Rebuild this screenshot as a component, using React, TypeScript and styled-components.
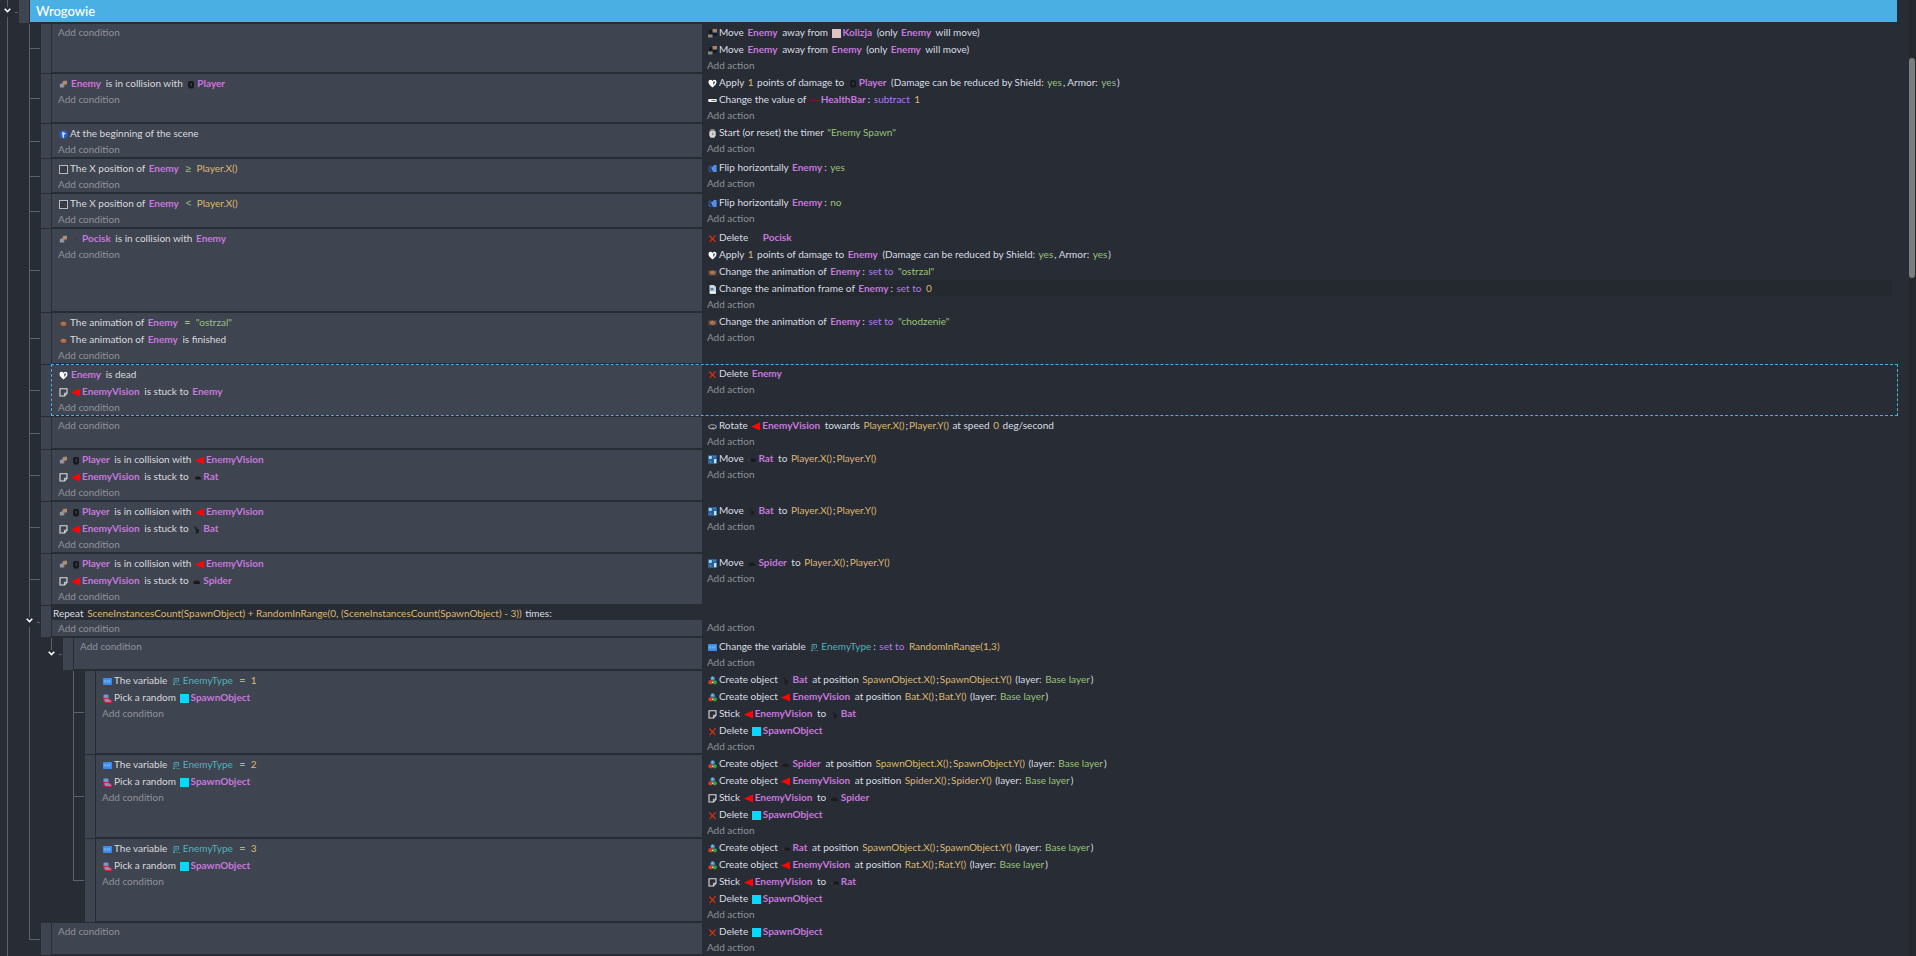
import type { ReactNode } from "react";
import styled, { createGlobalStyle, css } from "styled-components";

const color = {
  page: "#282c34",
  panel: "#3f4451",
  line: "#5c616d",
  group: "#4ab0e4",
  hover: "#24282f",
  muted: "#8f9299",
  object: "#c678dd",
  expression: "#deb871",
  string: "#98c379",
  operator: "#b07af0",
  variable: "#4fb3bd",
};

const GlobalStyle = createGlobalStyle`
  * { box-sizing: border-box; }
  body {
    margin: 0;
    background: ${color.page};
    color: #d9dde6;
    font: 400 10px/16px Lato, "Noto Sans", sans-serif;
  }
  button {
    padding: 0;
    border: 0;
    background: none;
    font: inherit;
    cursor: pointer;
  }
`;

/* ---------- page frame ---------- */

const Page = styled.div`
  display: flex;
  min-height: 100vh;
`;

const Sheet = styled.main`
  flex: 1;
  min-width: 0;
  padding-right: 12px;
`;

const ScrollTrack = styled.div`
  width: 7px;
  padding: 58px 1px 0 0;
  background: #25292f;
`;

const ScrollThumb = styled.div`
  height: 23vh;
  border-radius: 3px;
  background: #7c7d7e;
`;

/* ---------- tree ---------- */

const Nodes = styled.ul`
  margin: 0;
  padding: 0;
  list-style: none;
  flex: 1;
  min-width: 0;
`;

const NodeLine = styled.div`
  display: flex;
`;

const Children = styled.div`
  display: flex;
`;

const Rail = styled.div<{ $line: boolean }>`
  flex: 0 0 15px;
  margin-left: 7px;
  border-left: 1px solid ${(p) => (p.$line ? color.line : "transparent")};
`;

const LeafGutter = styled.div`
  display: grid;
  grid-template-rows: 1fr 1fr;
  flex: 0 0 19px;
  padding: 0 1px 0 7px;
`;

const Elbow = styled.div`
  border-left: 1px solid ${color.line};
  border-bottom: 1px solid ${color.line};
`;

const Tail = styled.div`
  border-left: 1px solid ${color.line};
`;

const FoldGutter = styled.div`
  display: flex;
  align-items: center;
  flex: 0 0 19px;
`;

const FoldColumn = styled.div`
  display: flex;
  flex-direction: column;
  align-items: center;
  align-self: stretch;
  width: 15px;
`;

const Stem = styled.div<{ $line: boolean }>`
  flex: 1;
  width: 1px;
  background: ${(p) => (p.$line ? color.line : "transparent")};
`;

const FoldButton = styled.button`
  display: flex;
  align-items: center;
  justify-content: center;
  width: 11px;
  height: 10px;
  padding-bottom: 3px;
`;

const Dash = styled.div`
  width: 3px;
  height: 1px;
  background: ${color.line};
`;

const Handle = styled.div`
  flex: 0 0 10px;
  margin: 0 1px 1px 0;
  background: ${color.panel};
  cursor: grab;
`;

/* ---------- events ---------- */

const GroupBar = styled.h1`
  flex: 1;
  margin: 0 0 2px;
  padding: 0 6px;
  background: ${color.group};
  color: #fff;
  font-size: 13px;
  font-weight: 500;
  line-height: 22px;
`;

const EventBody = styled.div<{ $selected?: boolean }>`
  display: flex;
  flex-direction: column;
  flex: 1;
  min-width: 0;
  margin-bottom: 2px;
  ${(p) => p.$selected && css`outline: 1px dashed ${color.group};`}
`;

const LoopHeader = styled.div`
  padding-left: 1px;
  line-height: 14px;
  white-space: nowrap;
`;

const Panels = styled.div`
  display: flex;
  flex: 1;
`;

const Conditions = styled.div`
  flex: 1;
  min-width: 0;
  padding: 1px 6px;
  background: ${color.panel};
  color: #d9dadc;
`;

const Actions = styled.div`
  flex: 0 0 calc(63vw - 12px);
  min-width: 0;
  padding: 0 5px;
`;

const Instruction = styled.div<{ $hovered?: boolean }>`
  height: 16px;
  margin-bottom: 1px;
  background: ${(p) => (p.$hovered ? color.hover : "none")};
  white-space: nowrap;
`;

const AddButton = styled.button`
  display: block;
  color: ${color.muted};
  line-height: 14px;
`;

const TypeIcon = styled.svg`
  width: 9px;
  height: 9px;
  margin: 0 2px 0 1px;
  vertical-align: -2px;
`;

const Thumb = styled.svg`
  width: 9px;
  height: 9px;
  margin-right: 2px;
  vertical-align: -2px;
`;

const ObjectName = styled.b`
  padding: 0 2px 0 1px;
  color: ${color.object};
`;

const Value = styled.span<{ $color: string }>`
  padding: 0 1px;
  color: ${(p) => p.$color};
`;

const Variable = styled.span`
  padding: 0 2px;
  color: ${color.variable};
`;

const Relation = styled.span`
  padding: 0 2px;
  color: ${color.string};
  font-family: "Noto Sans", sans-serif;
  line-height: 10px;
`;

/* ---------- icons, on a 9 by 9 grid ---------- */

const note = (
  <>
    <path d="M1 .8h7v4.6L5.6 8H1z" fill="none" stroke="#dedede" strokeWidth="1.1" />
    <path d="M8 5.2H5.4V8" fill="none" stroke="#dedede" strokeWidth=".9" />
  </>
);

const typeIcons: Record<string, ReactNode> = {
  separate: (
    <>
      <rect x="1" y="1" width="4" height="4" fill="#15171b" />
      <rect x="4.5" y="0" width="4.5" height="3.5" fill="#a58465" />
      <rect x="5" y="4" width="4" height="3" fill="#181a1e" />
      <rect x="0" y="5.5" width="4.5" height="3" fill="#85868a" />
    </>
  ),
  collision: (
    <>
      <path d="M3.500 2l1-1.300H8v3L7 5H3.500z" fill="#b08d70" />
      <path d="M.8 4.500l1-1h3.700v3l-1 1H.8z" fill="#96979b" />
      <path d="M4.800 4.600H7v1.200H4.800z" fill="#5a4a42" />
    </>
  ),
  heart: (
    <>
      <path d="M4.500 8.400C2 6.600 .5 5 .5 3c0-2.300 2.800-3 4-1 1.200-2 4-1.300 4 1 0 2-1.500 3.600-4 5.400z" fill="#fff" />
      <path d="M5.100 3c.5-1.200 1.900-.9 1.900.3 0 .9-.8 1.700-1.900 2.600z" fill="#5a5d65" />
    </>
  ),
  bar: (
    <>
      <rect x="0" y="3" width="9" height="3" rx="1.400" fill="#f2f2f2" />
      <rect x="3.500" y="4" width="4" height="1" fill="#6b6f78" />
    </>
  ),
  timer: (
    <>
      <rect x="2.500" y=".2" width="4" height="1.600" fill="#a9a2a2" />
      <path d="M1.300 2h6.400v4.500L6.400 8.800H2.600L1.300 6.500z" fill="#d9d4d2" />
      <path d="M4 3.500h1.500v2.800H4z" fill="#a09290" />
      <path d="M1 1.600h1.200v1.400H1zM7 1.600h1v1.400H7z" fill="#6f6b6d" />
    </>
  ),
  flip: (
    <>
      <path d="M.5 1.500h3v2H2.200v2.300h1.300V8H.5z" fill="#2c4f8c" />
      <path d="M8.600 1H6L4.500 2.600V4H4v2.400h.8V8h3.800z" fill="#4f8df0" />
      <path d="M3 3.500h2v1H3z" fill="#8ab6f5" />
    </>
  ),
  remove: (
    <>
      <path d="M1.300 1.500l6.200 6.300M7.700 1.300L1.500 8" stroke="#5b1d15" strokeWidth="2.200" />
      <path d="M1.300 1.500l6.200 6.300M7.700 1.300L1.500 8" stroke="#c03f26" strokeWidth="1.100" />
    </>
  ),
  animation: (
    <>
      <rect x="0" y="2" width="9" height="5.500" fill="#4a3a36" />
      <ellipse cx="4.500" cy="4.700" rx="3.300" ry="2.300" fill="#96684f" />
      <ellipse cx="4.500" cy="4.200" rx="1.600" ry="1" fill="#b08064" />
    </>
  ),
  frame: (
    <>
      <path d="M1.500 0h4.500L8 2v7H1.500z" fill="#c9d3de" />
      <path d="M2.500 3h3v2.500h-3z" fill="#5a7fa8" />
      <path d="M2 6.500h5.500V8H2z" fill="#f1f4f7" />
    </>
  ),
  note,
  rotate: (
    <>
      <ellipse cx="4.500" cy="4.700" rx="3.800" ry="2" fill="none" stroke="#a3a6ab" strokeWidth="1.100" />
      <path d="M4 5.600h2v2L4 6.700z" fill="#a3a6ab" />
    </>
  ),
  move: (
    <>
      <rect width="9" height="9" fill="#2c5c92" />
      <path d="M.8 1h3v3h-3z" fill="#9bd0ec" />
      <path d="M6 4h2.400v4.200H6z" fill="#c4e2f2" />
      <path d="M5 .8h3v1.700H5z" fill="#3f7fc0" />
      <path d="M1.500 6h2v1.500h-2z" fill="#4a8ecf" />
    </>
  ),
  variable: (
    <>
      <rect y="1" width="9" height="7" rx=".8" fill="#3d8bea" />
      <path d="M1.200 3l1 2.500L3.200 3M4 5.500l.7-2 .8 2M6.500 5.500V3h1.300" fill="none" stroke="#8cc0fb" strokeWidth=".7" />
    </>
  ),
  create: (
    <>
      <circle cx="4.700" cy="2.500" r="2.200" fill="#4a94c8" />
      <circle cx="2.500" cy="6.300" r="2.200" fill="#d23a2a" />
      <circle cx="6.800" cy="6.300" r="2.100" fill="#35a235" />
      <circle cx="4.300" cy="2" r=".8" fill="#a9d5ee" />
      <circle cx="4.600" cy="6.400" r=".8" fill="#d8d8d8" />
    </>
  ),
  start: (
    <>
      <circle cx="4.500" cy="4.500" r="4.200" fill="#2f5fc4" />
      <path d="M3 1.800l4 1.700-2 1.200v3H3.800z" fill="#d5e4fb" />
    </>
  ),
  position: (
    <>
      <rect x=".5" y=".5" width="8" height="8" fill="#343842" stroke="#b9bbbf" />
      <path d="M2 2h2v2H2zM5 4h2v2H5zM2 6h2v1H2z" fill="#3f434d" />
    </>
  ),
  pick: (
    <>
      <rect x=".5" y=".5" width="5" height="4" rx="1" fill="#7f8fd6" />
      <path d="M1 4.500h4.500l3 2.300V8.500H2.500L1 7z" fill="#8890c8" stroke="#c8283c" strokeWidth="1.100" />
    </>
  ),
};

const thumbs: Record<string, ReactNode> = {
  Player: (
    <>
      <path d="M3 1h4l1 1.500V7L7 8.500H3L2 6.500V3z" fill="#17191d" />
      <path d="M4.500 3H6v3H4.500z" fill="#3a3c40" />
    </>
  ),
  Bat: <path d="M2.500 1l1.500 1 1 2h2v3l-1 1.500H3.500L4 5 2.500 3z" fill="#1d1f24" />,
  Rat: (
    <>
      <path d="M2.500 5l2-1.500h3L9 5v1.500H4z" fill="#17181c" />
      <path d="M1 4.500h2.500v1H1z" fill="#5a3f3f" />
    </>
  ),
  Spider: <path d="M1 5.500L3 3.500h3L8 5v2H2z" fill="#1b1c20" />,
  Pocisk: <circle cx="4" cy="4.500" r=".7" fill="#33353c" />,
  Kolizja: <rect width="9" height="9" fill="#e0c2c4" />,
  HealthBar: <rect y="4" width="9" height="1" fill="#84191d" />,
  EnemyVision: <path d="M9 .5v8L0 4.500z" fill="#fb0505" />,
  SpawnObject: <rect width="9" height="9" fill="#06d9ff" />,
};

const variableThumb = (
  <path
    d="M2 8V1.500h4.500V5M3 3.200h2.200M3 5.200h2.500M1 7.500h2M4.500 7.500h1M6.500 7.500h1.300"
    fill="none"
    stroke={color.variable}
    strokeWidth=".8"
  />
);

const Chevron = () => (
  <svg width="7" height="5" viewBox="0 0 7 5" aria-hidden="true">
    <path d="M.7.8l2.800 2.800L6.300.8" fill="none" stroke="#fff" strokeWidth="1.500" />
  </svg>
);

/* ---------- sentences ----------
   {o:..} object, {e:..} expression, {s:..} text value,
   {p:..} operator, {r:..} comparison, {v:..} variable */

function Sentence({ text }: { text: string }) {
  const parts = text.split(/(\{\w:[^}]*\})/).filter(Boolean);
  return (
    <>
      {parts.map((part, i) => {
        const match = /^\{(\w):([^}]*)\}$/.exec(part);
        if (!match) return part;
        const [, kind, value] = match;
        switch (kind) {
          case "o":
            return (
              <ObjectName key={i}>
                {thumbs[value] && (
                  <Thumb viewBox="0 0 9 9" aria-hidden="true">
                    {thumbs[value]}
                  </Thumb>
                )}
                {value}
              </ObjectName>
            );
          case "v":
            return (
              <Variable key={i}>
                <Thumb viewBox="0 0 9 9" aria-hidden="true">
                  {variableThumb}
                </Thumb>
                {value}
              </Variable>
            );
          case "r":
            return <Relation key={i}>{value}</Relation>;
          case "s":
            return <Value key={i} $color={color.string}>{value}</Value>;
          case "p":
            return <Value key={i} $color={color.operator}>{value}</Value>;
          default:
            return <Value key={i} $color={color.expression}>{value}</Value>;
        }
      })}
    </>
  );
}

/* ---------- data ---------- */

type Line = { icon: string; text: string; hovered?: boolean };

type EventData = {
  loop?: string;
  conditions?: Line[];
  actions?: Line[];
  selected?: boolean;
  children?: EventData[];
};

const line = (icon: string, text: string, hovered = false): Line => ({ icon, text, hovered });

const damage = (target: string) =>
  line("heart", `Apply {e:1} points of damage to {o:${target}} (Damage can be reduced by Shield: {s:yes}, Armor: {s:yes})`);

const chase = (name: string): EventData => ({
  conditions: [
    line("collision", "{o:Player} is in collision with {o:EnemyVision}"),
    line("note", `{o:EnemyVision} is stuck to {o:${name}}`),
  ],
  actions: [line("move", `Move {o:${name}} to {e:Player.X()};{e:Player.Y()}`)],
});

const spawn = (type: number, name: string): EventData => ({
  conditions: [
    line("variable", `The variable {v:EnemyType} {r:=} {e:${type}}`),
    line("pick", "Pick a random {o:SpawnObject}"),
  ],
  actions: [
    line("create", `Create object {o:${name}} at position {e:SpawnObject.X()};{e:SpawnObject.Y()} (layer: {s:Base layer})`),
    line("create", `Create object {o:EnemyVision} at position {e:${name}.X()};{e:${name}.Y()} (layer: {s:Base layer})`),
    line("note", `Stick {o:EnemyVision} to {o:${name}}`),
    line("remove", "Delete {o:SpawnObject}"),
  ],
});

const events: EventData[] = [
  {
    actions: [
      line("separate", "Move {o:Enemy} away from {o:Kolizja} (only {o:Enemy} will move)"),
      line("separate", "Move {o:Enemy} away from {o:Enemy} (only {o:Enemy} will move)"),
    ],
  },
  {
    conditions: [line("collision", "{o:Enemy} is in collision with {o:Player}")],
    actions: [damage("Player"), line("bar", "Change the value of {o:HealthBar}: {p:subtract} {e:1}")],
  },
  {
    conditions: [line("start", "At the beginning of the scene")],
    actions: [line("timer", 'Start (or reset) the timer {s:"Enemy Spawn"}')],
  },
  {
    conditions: [line("position", "The X position of {o:Enemy} {r:≥} {e:Player.X()}")],
    actions: [line("flip", "Flip horizontally {o:Enemy}: {s:yes}")],
  },
  {
    conditions: [line("position", "The X position of {o:Enemy} {r:<} {e:Player.X()}")],
    actions: [line("flip", "Flip horizontally {o:Enemy}: {s:no}")],
  },
  {
    conditions: [line("collision", "{o:Pocisk} is in collision with {o:Enemy}")],
    actions: [
      line("remove", "Delete {o:Pocisk}"),
      damage("Enemy"),
      line("animation", 'Change the animation of {o:Enemy}: {p:set to} {s:"ostrzal"}'),
      line("frame", "Change the animation frame of {o:Enemy}: {p:set to} {e:0}", true),
    ],
  },
  {
    conditions: [
      line("animation", 'The animation of {o:Enemy} {r:=} {s:"ostrzal"}'),
      line("animation", "The animation of {o:Enemy} is finished"),
    ],
    actions: [line("animation", 'Change the animation of {o:Enemy}: {p:set to} {s:"chodzenie"}')],
  },
  {
    selected: true,
    conditions: [
      line("heart", "{o:Enemy} is dead"),
      line("note", "{o:EnemyVision} is stuck to {o:Enemy}"),
    ],
    actions: [line("remove", "Delete {o:Enemy}")],
  },
  {
    actions: [
      line("rotate", "Rotate {o:EnemyVision} towards {e:Player.X()};{e:Player.Y()} at speed {e:0} deg/second"),
    ],
  },
  chase("Rat"),
  chase("Bat"),
  chase("Spider"),
  {
    loop: "Repeat {e:SceneInstancesCount(SpawnObject) + RandomInRange(0, (SceneInstancesCount(SpawnObject) - 3))} times:",
    children: [
      {
        actions: [line("variable", "Change the variable {v:EnemyType}: {p:set to} {e:RandomInRange(1,3)}")],
        children: [spawn(1, "Bat"), spawn(2, "Spider"), spawn(3, "Rat")],
      },
    ],
  },
  { actions: [line("remove", "Delete {o:SpawnObject}")] },
];

/* ---------- components ---------- */

function Instructions({ lines = [] }: { lines?: Line[] }) {
  return (
    <>
      {lines.map((item, i) => (
        <Instruction key={i} $hovered={item.hovered}>
          <TypeIcon viewBox="0 0 9 9" aria-hidden="true">
            {typeIcons[item.icon]}
          </TypeIcon>
          <Sentence text={item.text} />
        </Instruction>
      ))}
    </>
  );
}

function Fold({ last, name }: { last: boolean; name: string }) {
  return (
    <FoldGutter>
      <FoldColumn>
        <Stem $line />
        <FoldButton type="button" aria-expanded="true" aria-label={`Collapse ${name}`}>
          <Chevron />
        </FoldButton>
        <Stem $line={!last} />
      </FoldColumn>
      <Dash />
    </FoldGutter>
  );
}

function EventNode({ event, last }: { event: EventData; last: boolean }) {
  return (
    <li>
      <NodeLine>
        {event.children ? (
          <Fold last={last} name="event" />
        ) : (
          <LeafGutter>
            <Elbow />
            {!last && <Tail />}
          </LeafGutter>
        )}
        <Handle />
        <EventBody $selected={event.selected}>
          {event.loop && (
            <LoopHeader>
              <Sentence text={event.loop} />
            </LoopHeader>
          )}
          <Panels>
            <Conditions>
              <Instructions lines={event.conditions} />
              <AddButton type="button">Add condition</AddButton>
            </Conditions>
            <Actions>
              <Instructions lines={event.actions} />
              <AddButton type="button">Add action</AddButton>
            </Actions>
          </Panels>
        </EventBody>
      </NodeLine>
      {event.children && <Branch items={event.children} continues={!last} />}
    </li>
  );
}

function Branch({ items, continues }: { items: EventData[]; continues: boolean }) {
  return (
    <Children>
      <Rail $line={continues} />
      <Nodes>
        {items.map((item, i) => (
          <EventNode key={i} event={item} last={i === items.length - 1} />
        ))}
      </Nodes>
    </Children>
  );
}

export default function App() {
  return (
    <Page>
      <GlobalStyle />
      <Sheet>
        <NodeLine>
          <Fold last={false} name="Wrogowie" />
          <Handle />
          <GroupBar>Wrogowie</GroupBar>
        </NodeLine>
        <Branch items={events} continues />
      </Sheet>
      <ScrollTrack>
        <ScrollThumb />
      </ScrollTrack>
    </Page>
  );
}
